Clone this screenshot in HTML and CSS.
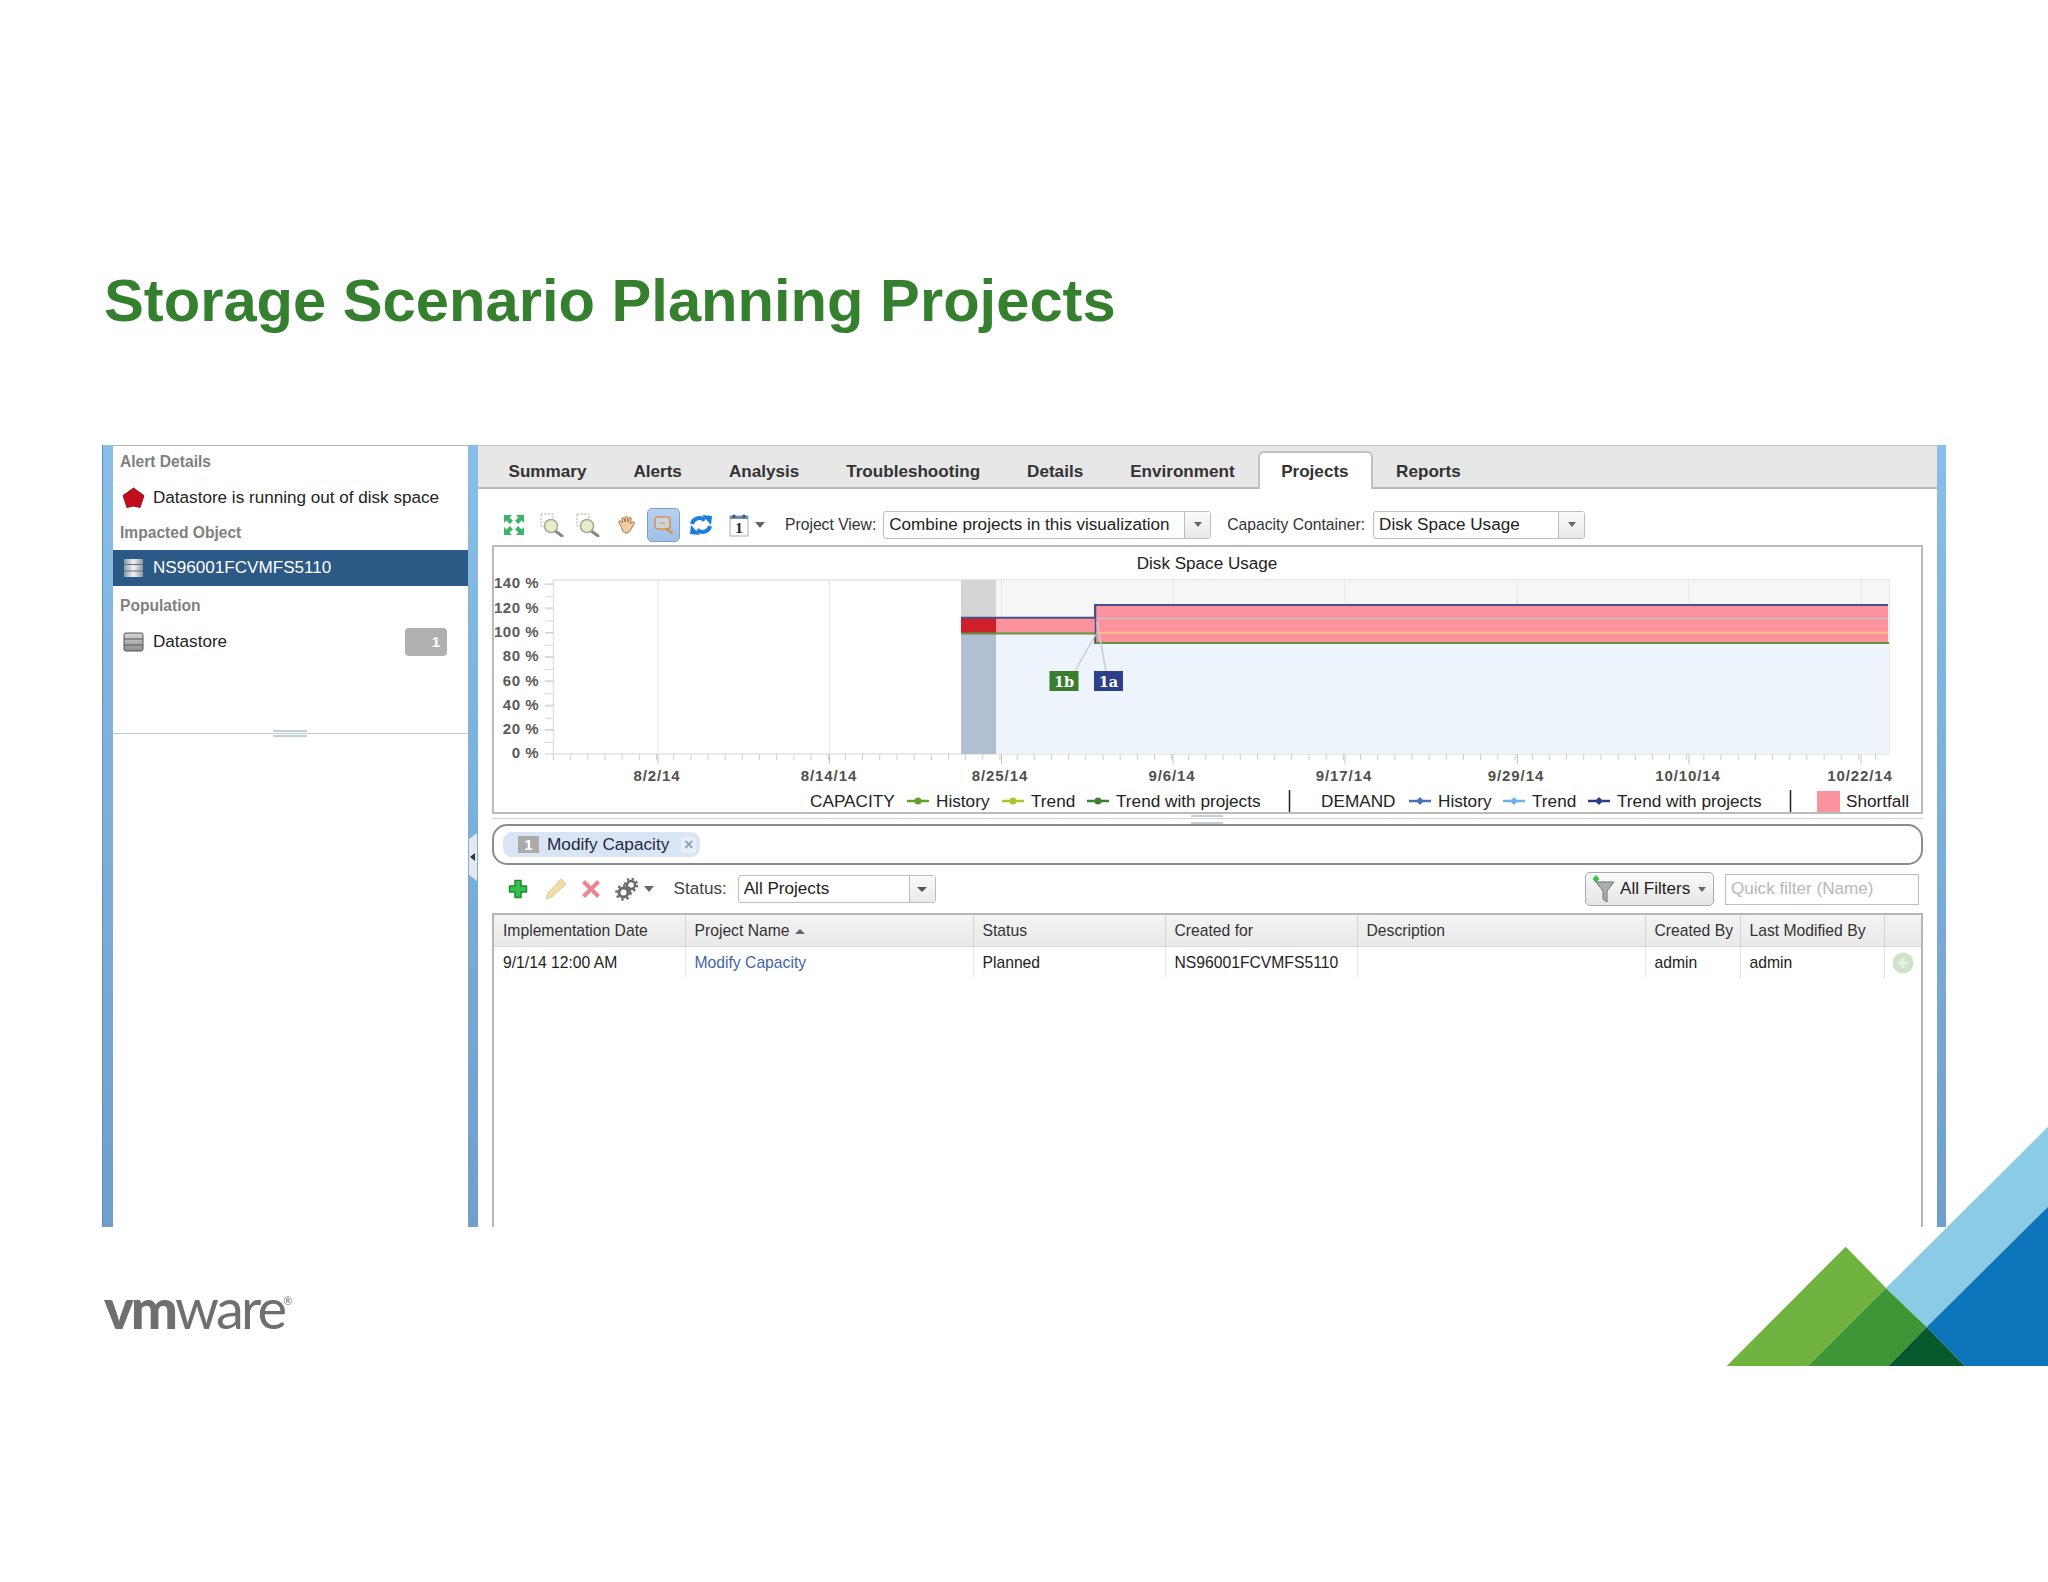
FILE: index.html
```html
<!DOCTYPE html>
<html lang="en">
<head>
  <meta charset="UTF-8">
  <title>Storage Scenario Planning Projects</title>
  <link rel="stylesheet" href="styles.css">
</head>
<body>
  <div class="slide">
    <h1 class="slide-title">Storage Scenario Planning Projects</h1>

    <div class="shot">
      <div class="rail left"></div>

      <!-- left panel -->
      <div class="side">
        <div class="side-head">Alert Details</div>
        <div class="side-row alert-row">
          <svg class="side-icon" width="23" height="22" viewBox="0 0 23 22"><path d="M11.5 1 22 8.6 18 20.5 11.5 19 5 20.5 1 8.6Z" fill="#c40d1c" stroke="#8f1b24"/></svg>
          <span>Datastore is running out of disk space</span>
        </div>
        <div class="side-head impacted">Impacted Object</div>
        <div class="side-row selected">
          <svg class="side-icon" width="21" height="20" viewBox="0 0 21 20"><rect x="1" y="1" width="19" height="18" rx="1" fill="url(#dsLight)"/><path d="M1 6.5h19M1 13h19" stroke="#5a6f85"/></svg>
          <span>NS96001FCVMFS5110</span>
        </div>
        <div class="side-head population">Population</div>
        <div class="side-row">
          <svg class="side-icon" width="21" height="20" viewBox="0 0 21 20"><rect x="1" y="1" width="19" height="18" rx="2" fill="url(#dsGrey)" stroke="#555"/><path d="M1 7h19M1 13h19" stroke="#555"/></svg>
          <span>Datastore</span>
          <span class="count">1</span>
        </div>
        <div class="side-split"><span class="grip"></span></div>
      </div>

      <div class="rail inner">
        <span class="collapse"></span>
      </div>

      <div class="main">
        <div class="tabs">
          <span class="tab">Summary</span>
          <span class="tab">Alerts</span>
          <span class="tab">Analysis</span>
          <span class="tab">Troubleshooting</span>
          <span class="tab">Details</span>
          <span class="tab">Environment</span>
          <span class="tab active">Projects</span>
          <span class="tab">Reports</span>
        </div>

        <!-- chart toolbar -->
        <div class="toolbar chart-tools">
          <svg class="tool expand" width="22" height="22" viewBox="0 0 22 22" fill="#3fb56c">
            <path d="M1 1h8L6.6 3.400 10 6.800 6.800 10 3.400 6.600 1 9ZM21 1v8l-2.400-2.400L15.200 10 12 6.800l3.400-3.400L13 1ZM1 21v-8l2.400 2.400L6.800 12 10 15.200l-3.400 3.400L9 21ZM21 21h-8l2.400-2.400L12 15.200l3.200-3.200 3.400 3.400L21 13Z"/>
          </svg>
          <svg class="tool zoom-a" width="24" height="24" viewBox="0 0 24 24">
            <rect x="1" y="1" width="12" height="12" fill="none" stroke="#9db59b" stroke-dasharray="2 1.500"/>
            <path d="M14 17l8 6" stroke="#85897f" stroke-width="3" stroke-linecap="round"/>
            <circle cx="11" cy="13" r="6.500" fill="#e8edc8" stroke="#a3aa98" stroke-width="1.500"/>
          </svg>
          <svg class="tool zoom-b" width="24" height="24" viewBox="0 0 24 24">
            <rect x="1" y="1" width="12" height="12" fill="none" stroke="#9db59b" stroke-dasharray="2 1.500"/>
            <path d="M14 17l8 6" stroke="#85897f" stroke-width="3" stroke-linecap="round"/>
            <circle cx="11" cy="13" r="6.500" fill="#e8edc8" stroke="#a3aa98" stroke-width="1.500"/>
          </svg>
          <svg class="tool hand" width="20" height="20" viewBox="0 0 20 20">
            <path d="M4 11 2 7.500c-.8-1.500 1-2.500 2-1.200L5.500 8 5 4c-.2-1.600 2-1.800 2.300-.3L8 7l.2-4.500c.1-1.500 2.300-1.500 2.400 0L11 7l1-3.800c.4-1.400 2.400-1 2.200.5L13.500 8.500 15.600 7c1.300-.8 2.400.6 1.500 1.800l-3 5c-1 2.500-2.500 4.200-5 4.200-3 0-4-3-5.100-7Z" fill="#f0cda6" stroke="#a8703f"/>
          </svg>
          <span class="tool-btn">
            <svg width="24" height="24" viewBox="0 0 24 24">
              <rect x="3" y="4" width="15" height="12" rx="3" fill="#c9d4de" stroke="#d9914e" stroke-width="1.500"/>
              <path d="M7 10h6" stroke="#d9914e"/>
              <path d="M14 16l6 4" stroke="#d9914e" stroke-width="2.500" stroke-linecap="round"/>
            </svg>
          </span>
          <svg class="tool refresh" width="24" height="24" viewBox="0 0 24 24" fill="none" stroke="#1d7fdc" stroke-width="4">
            <path d="M3 11c1-5 7-8 13-4"/>
            <path d="M21 13c-1 5-7 8-13 4"/>
            <path d="M13 2l10 1-1 9Z" fill="#1d7fdc" stroke="none"/>
            <path d="M11 22l-10-1 1-9Z" fill="#1d7fdc" stroke="none"/>
          </svg>
          <svg class="tool calendar" width="20" height="24" viewBox="0 0 20 24">
            <rect x="1" y="3" width="18" height="20" fill="#fbfbfb" stroke="#9fb2c5"/>
            <rect x="1" y="3" width="18" height="3" fill="#6f8aa5"/>
            <circle cx="5" cy="3" r="1.600" fill="#2f4d70"/>
            <circle cx="15" cy="3" r="1.600" fill="#2f4d70"/>
            <text x="10" y="20" class="cal-day" text-anchor="middle">1</text>
          </svg>
          <span class="caret cal-caret"></span>
          <label class="tool-label view-label">Project View:</label>
          <span class="combo view-combo"><span class="combo-text">Combine projects in this visualization</span><span class="combo-btn"><i class="caret small"></i></span></span>
          <label class="tool-label cap-label">Capacity Container:</label>
          <span class="combo cap-combo"><span class="combo-text">Disk Space Usage</span><span class="combo-btn"><i class="caret small"></i></span></span>
        </div>

        <!-- chart, drawn in page coordinates -->
        <div class="chart">
          <svg class="chart-svg" width="1426" height="265" viewBox="494 547 1426 265">
            <text class="chart-title" x="1207" y="569" text-anchor="middle">Disk Space Usage</text>

            <rect x="553.500" y="580" width="1335.500" height="174" fill="#fff" stroke="#e2e2e4" stroke-width="1.500"/>
            <rect x="996" y="580.500" width="893" height="173" fill="#f6f6f7"/>
            <path d="M658 580v174M829.500 580v174M1001.500 580v174M1173 580v174M1345 580v174M1517.500 580v174M1689 580v174M1861 580v174" stroke="#e6e6e9"/>

            <rect x="996" y="633" width="99" height="121" fill="#edf4fb"/>
            <rect x="1095" y="643" width="793" height="111" fill="#edf4fb"/>
            <rect x="961" y="580" width="35" height="38" fill="#d5d5d6"/>
            <rect x="961" y="633" width="35" height="121" fill="#b2bfd2"/>

            <rect x="996" y="618" width="99" height="15" fill="#fc929c"/>
            <rect x="961" y="618" width="35" height="15" fill="#cf1f2b"/>
            <rect x="1095" y="605" width="793" height="38" fill="#fc929c"/>
            <path d="M1095 618.500h793" stroke="#d9b3c1" stroke-width="2"/>
            <path d="M1095 632.700h793" stroke="#f6c08c" stroke-width="2"/>
            <path d="M961 617.800h134V605h793" fill="none" stroke="#47508f" stroke-width="2"/>
            <path d="M961 633.500h134V643h794" fill="none" stroke="#5f963f" stroke-width="2"/>
            <path d="M1095.500 605v38" stroke="#47508f" stroke-width="1.500"/>

            <path d="M1096 634 1075 671M1097 622 1106 671" stroke="#c9cdd2" stroke-width="1.500"/>
            <rect x="1049.500" y="671" width="29" height="20" fill="#3a7d2e"/>
            <text class="flag" x="1064" y="686.500" text-anchor="middle">1b</text>
            <rect x="1094" y="671" width="29" height="20" fill="#2d3f8a"/>
            <text class="flag" x="1108.500" y="686.500" text-anchor="middle">1a</text>

            <!-- axis ticks -->
            <path d="M545 608h8M545 632.500h8M545 656.800h8M545 681h8M545 705.300h8M545 729.700h8M545 754h8M545 584h8" stroke="#c9c9c9"/>
            <line x1="549" y1="584" x2="549" y2="754" stroke="#d8d8d8" stroke-width="8" stroke-dasharray="1 11.150"/>
            <line x1="553" y1="757" x2="1889" y2="757" stroke="#cfcfcf" stroke-width="6" stroke-dasharray="1 16.170"/>
            <path d="M658 754v10M829.500 754v10M1001.500 754v10M1173 754v10M1345 754v10M1517.500 754v10M1689 754v10M1861 754v10" stroke="#c4c4c4"/>

            <g class="y-labels" text-anchor="end">
              <text x="539" y="588">140 %</text>
              <text x="539" y="612.500">120 %</text>
              <text x="539" y="637">100 %</text>
              <text x="539" y="661">80 %</text>
              <text x="539" y="685.500">60 %</text>
              <text x="539" y="709.500">40 %</text>
              <text x="539" y="734">20 %</text>
              <text x="539" y="758">0 %</text>
            </g>
            <g class="x-labels" text-anchor="middle">
              <text x="657" y="780.500">8/2/14</text>
              <text x="829" y="780.500">8/14/14</text>
              <text x="1000" y="780.500">8/25/14</text>
              <text x="1172" y="780.500">9/6/14</text>
              <text x="1344" y="780.500">9/17/14</text>
              <text x="1516" y="780.500">9/29/14</text>
              <text x="1688" y="780.500">10/10/14</text>
              <text x="1860" y="780.500">10/22/14</text>
            </g>

            <!-- legend -->
            <g class="legend">
              <text x="810" y="807">CAPACITY</text>
              <path d="M907 801h22" stroke="#62a02c" stroke-width="2.500"/><circle cx="918" cy="801" r="3.500" fill="#62a02c"/>
              <text x="936" y="807">History</text>
              <path d="M1002 801h22" stroke="#a7c82c" stroke-width="2.500"/><circle cx="1013" cy="801" r="3.500" fill="#a7c82c"/>
              <text x="1031" y="807">Trend</text>
              <path d="M1087 801h22" stroke="#3f7f35" stroke-width="2.500"/><circle cx="1098" cy="801" r="3.500" fill="#3f7f35"/>
              <text x="1116" y="807">Trend with projects</text>
              <path d="M1289.500 790v22" stroke="#222" stroke-width="1.500"/>
              <text x="1321" y="807">DEMAND</text>
              <path d="M1409 801h22" stroke="#4a72bd" stroke-width="2.500"/><path d="M1420 797l4 4-4 4-4-4Z" fill="#4a72bd"/>
              <text x="1438" y="807">History</text>
              <path d="M1503 801h22" stroke="#6db0ee" stroke-width="2.500"/><path d="M1514 797l4 4-4 4-4-4Z" fill="#6db0ee"/>
              <text x="1532" y="807">Trend</text>
              <path d="M1588 801h22" stroke="#2b3f80" stroke-width="2.500"/><path d="M1599 797l4 4-4 4-4-4Z" fill="#2b3f80"/>
              <text x="1617" y="807">Trend with projects</text>
              <path d="M1790.500 790v22" stroke="#222" stroke-width="1.500"/>
              <rect x="1817" y="791" width="23" height="21" fill="#fc929c"/>
              <text x="1846" y="807">Shortfall</text>
            </g>
          </svg>
        </div>

        <div class="pane-split"><span class="grip wide"></span></div>

        <div class="pill-box">
          <span class="chip">
            <span class="chip-num">1</span>
            <span class="chip-text">Modify Capacity</span>
            <span class="chip-close">&#215;</span>
          </span>
        </div>

        <!-- project toolbar -->
        <div class="toolbar projects">
          <svg class="tool add" width="20" height="20" viewBox="0 0 20 20"><path d="M7 1.500h6v5.500h5.500v6H13v5.500H7V13H1.500V7H7Z" fill="#35c24a" stroke="#1f8a30" stroke-width="1.500" stroke-linejoin="round"/></svg>
          <svg class="tool pencil" width="24" height="24" viewBox="0 0 24 24"><path d="M2 22l2-6L17 2l5 5L8 20Z" fill="#f1dda8" stroke="#d9c99f"/></svg>
          <svg class="tool remove" width="20" height="20" viewBox="0 0 20 20"><path d="M4 1l6 6 6-6 3 3-6 6 6 6-3 3-6-6-6 6-3-3 6-6-6-6Z" fill="#e88891"/></svg>
          <svg class="tool gears" width="24" height="24" viewBox="0 0 24 24" fill="none" stroke="#6b6b6b">
            <circle cx="16" cy="8" r="4" stroke-width="2.500"/>
            <circle cx="16" cy="8" r="6" stroke-width="2.500" stroke-dasharray="2.200 2.500"/>
            <circle cx="8.500" cy="15.500" r="4.500" stroke-width="3" fill="#fff"/>
            <circle cx="8.500" cy="15.500" r="7" stroke-width="2.500" stroke-dasharray="2.500 2.900"/>
          </svg>
          <span class="caret gear-caret"></span>
          <label class="status-label">Status:</label>
          <span class="combo status-combo"><span class="combo-text">All Projects</span><span class="combo-btn"><i class="caret small dark"></i></span></span>
          <span class="filter-btn">
            <svg width="24" height="28" viewBox="0 0 24 28">
              <path d="M5 7h18l-7 9v11l-4-3v-8Z" fill="#a9adad" stroke="#6f7474"/>
              <path d="M5 0l3.500 4L5 8 1.500 4Z" fill="#35c24a"/>
            </svg>
            <span>All Filters</span>
            <i class="caret small"></i>
          </span>
          <span class="quick-filter">Quick filter (Name)</span>
        </div>

        <div class="grid-wrap">
          <table class="grid">
            <colgroup>
              <col class="c-date"><col class="c-name"><col class="c-status"><col class="c-for"><col class="c-desc"><col class="c-by"><col class="c-mod"><col class="c-act">
            </colgroup>
            <thead>
              <tr>
                <th>Implementation Date</th>
                <th>Project Name <i class="sort-up"></i></th>
                <th>Status</th>
                <th>Created for</th>
                <th>Description</th>
                <th>Created By</th>
                <th>Last Modified By</th>
                <th></th>
              </tr>
            </thead>
            <tbody>
              <tr>
                <td>9/1/14 12:00 AM</td>
                <td class="link">Modify Capacity</td>
                <td>Planned</td>
                <td>NS96001FCVMFS5110</td>
                <td></td>
                <td>admin</td>
                <td>admin</td>
                <td class="act"><svg width="22" height="22" viewBox="0 0 22 22"><circle cx="11" cy="11" r="10.500" fill="#cfe3c9"/><path d="M11 6v10M6 11h10" stroke="#e6f1e2" stroke-width="3"/></svg></td>
              </tr>
            </tbody>
          </table>
        </div>
      </div>

      <div class="rail right"></div>
    </div>

    <div class="logo"><span class="vm">vm</span><span class="ware">ware</span><span class="reg">&#174;</span></div>

    <!-- corner graphic -->
    <svg class="corner" width="322" height="240" viewBox="1726 1126 322 240">
      <polygon points="1726.700,1366 1845.700,1246.700 1886,1288 1807.700,1366" fill="#70b43f"/>
      <polygon points="1807.700,1366 1886,1288 1926.700,1327 1888.300,1366" fill="#3f9637"/>
      <polygon points="1888.300,1366 1926.700,1327 1965,1366" fill="#05592c"/>
      <polygon points="1886,1288 2048,1126.700 2048,1206.700 1926.700,1327" fill="#8ccbe5"/>
      <polygon points="1926.700,1327 2048,1206.700 2048,1366 1965,1366" fill="#0c75b9"/>
    </svg>
  </div>

  <svg width="0" height="0" class="defs">
    <defs>
      <linearGradient id="dsGrey" x1="0" y1="0" x2="0" y2="1"><stop offset="0" stop-color="#d5d5d5"/><stop offset="1" stop-color="#8d8d8d"/></linearGradient>
      <linearGradient id="dsLight" x1="0" y1="0" x2="1" y2="0"><stop offset="0" stop-color="#8f99a3"/><stop offset=".5" stop-color="#f2f2f2"/><stop offset="1" stop-color="#8f99a3"/></linearGradient>
    </defs>
  </svg>
</body>
</html>
```

FILE: styles.css
```css
/* slide frame */
body {
  margin: 0;
  background: #fff;
  font-family: "Liberation Sans", Arial, sans-serif;
}
.slide {
  position: relative;
  width: 2048px;
  height: 1582px;
  overflow: hidden;
  background: #fff;
}
.slide-title {
  margin: 0;
  padding: 263px 0 0 104px;
  height: 445px;
  box-sizing: border-box;
  font-size: 59.700px;
  line-height: 76px;
  font-weight: bold;
  color: #35802f;
}
.defs {
  position: absolute;
}

/* embedded screenshot */
.shot {
  display: flex;
  width: 1844px;
  height: 782px;
  margin-left: 102px;
  color: #222;
  overflow: hidden;
}
.rail {
  flex: none;
  width: 10px;
  background: linear-gradient(#88bee7, #6f9fca);
}
.rail.left {
  width: 11px;
  box-shadow: inset 1px 0 0 #5f8db5;
}
.rail.right {
  width: 9px;
}
.rail.inner {
  position: relative;
}
.collapse {
  position: absolute;
  left: 1px;
  top: 388px;
  width: 8px;
  height: 48px;
  background: #e4e8ec;
  clip-path: polygon(0 6px, 100% 0, 100% 100%, 0 calc(100% - 6px));
}
.collapse::after {
  content: "";
  position: absolute;
  left: 1px;
  top: 20px;
  border: 4px solid transparent;
  border-left: 0;
  border-right: 5px solid #333;
}

/* left panel */
.side {
  flex: none;
  width: 355px;
  border-top: 1px solid #b5b5b5;
  box-sizing: border-box;
}
.side-head {
  height: 32px;
  padding-left: 7px;
  font-size: 15.600px;
  font-weight: bold;
  line-height: 32px;
  color: #808080;
}
.side-head.impacted {
  height: 34px;
  line-height: 34px;
}
.side-head.population {
  height: 39px;
  line-height: 40px;
}
.side-row {
  display: flex;
  align-items: center;
  height: 34px;
  padding-left: 9px;
  font-size: 17.100px;
}
.alert-row {
  height: 38px;
  padding-top: 1px;
  box-sizing: border-box;
}
.side-icon {
  flex: none;
  margin-right: 8px;
  width: 23px;
}
.side-row.selected {
  height: 36px;
  color: #fff;
  background: #2c5985;
}
.count {
  width: 42px;
  height: 28px;
  margin-left: auto;
  margin-right: 21px;
  padding-right: 7px;
  box-sizing: border-box;
  border-radius: 4px;
  background: #b0b0b0;
  color: #fff;
  font-size: 15px;
  font-weight: bold;
  line-height: 28px;
  text-align: right;
}
.side-split {
  position: relative;
  margin-top: 74px;
  border-top: 1.500px solid #bccbdc;
}
.grip {
  position: absolute;
  left: 160px;
  top: -4px;
  width: 34px;
  height: 3px;
  border-top: 2px solid #c3cfdd;
  border-bottom: 2px solid #c3cfdd;
}

/* tabs */
.main {
  flex: 1;
  display: flex;
  flex-direction: column;
  min-width: 0;
}
.tabs {
  flex: none;
  display: flex;
  align-items: flex-end;
  height: 44px;
  padding-left: 7px;
  box-sizing: border-box;
  background: #e7e7e7;
  border-top: 1px solid #c8c8c8;
  border-bottom: 2px solid #b9b9b9;
}
.tab {
  height: 36px;
  padding: 0 23.500px;
  font-size: 17.100px;
  font-weight: bold;
  line-height: 42px;
  color: #333;
}
.tab.active {
  height: 38px;
  margin-bottom: -2px;
  padding: 0 22px 0 21px;
  background: #fff;
  border: 2px solid #c2c2c2;
  border-bottom: 0;
  border-radius: 6px 6px 0 0;
  box-sizing: border-box;
  line-height: 38px;
}

/* toolbars */
.toolbar {
  flex: none;
  display: flex;
  align-items: center;
  box-sizing: border-box;
  height: 58px;
  padding-left: 25px;
  position: relative;
}
.chart-tools {
  height: 56px;
  padding-top: 15px;
}
.tool {
  flex: none;
}
.zoom-a {
  margin-left: 15px;
}
.zoom-b {
  margin-left: 12px;
}
.hand {
  margin-left: 17px;
}
.tool-btn {
  display: flex;
  align-items: center;
  justify-content: center;
  width: 33px;
  height: 34px;
  margin-left: 10px;
  box-sizing: border-box;
  border: 1px solid #7f9fc6;
  border-radius: 5px;
  background: linear-gradient(#b6d2f1, #9fc0e6);
}
.refresh {
  margin-left: 9px;
}
.calendar {
  margin-left: 16px;
}
.caret {
  display: inline-block;
  width: 0;
  height: 0;
  border: 5px solid transparent;
  border-top: 6px solid #666;
  border-bottom: 0;
}
.caret.small {
  border-width: 5px 4px 0;
  border-top-color: #666;
}
.caret.dark {
  border-width: 5px 5px 0;
  border-top-color: #555;
}
.cal-caret {
  margin-left: 6px;
}
.cal-day {
  font: bold 15px "Liberation Serif", serif;
  fill: #222;
}
.tool-label {
  font-size: 15.700px;
  color: #333;
}
.view-label {
  margin-left: 20px;
}
.cap-label {
  margin-left: 16px;
}
.combo {
  flex: none;
  display: flex;
  align-items: stretch;
  box-sizing: border-box;
  height: 28px;
  border: 1.500px solid #bdbdbd;
  border-radius: 3px;
  background: #fff;
  font-size: 17.100px;
  line-height: 25px;
  color: #222;
}
.combo-text {
  flex: 1;
  padding-left: 5px;
  white-space: nowrap;
}
.combo-btn {
  display: flex;
  align-items: center;
  justify-content: center;
  flex: none;
  width: 25px;
  border-left: 1.500px solid #bdbdbd;
  background: linear-gradient(#fafafa, #e9e9e9);
}
.view-combo {
  width: 328px;
  margin-left: 7px;
}
.cap-combo {
  width: 212px;
  margin-left: 8px;
}
.status-combo {
  width: 198px;
  margin-left: 11px;
}

/* chart */
.chart {
  flex: none;
  width: 1431px;
  height: 269px;
  margin-left: 14px;
  box-sizing: border-box;
  border: 2px solid #bababa;
  background: #fff;
}
.chart-svg {
  display: block;
  font-family: "Liberation Sans", Arial, sans-serif;
}
.chart-title {
  font-size: 17.100px;
  fill: #222;
}
.flag {
  font: bold 14.500px "DejaVu Serif", serif;
  fill: #fff;
}
.y-labels text,
.x-labels text {
  font-size: 15px;
  fill: #505050;
  font-weight: bold;
}
.x-labels text {
  letter-spacing: .9px;
}
.y-labels text {
  fill: #5a5a5a;
  letter-spacing: .5px;
}
.legend text {
  font-size: 17.200px;
  fill: #222;
}
.pane-split {
  position: relative;
  flex: none;
  height: 10px;
}
.pane-split::before {
  content: "";
  position: absolute;
  left: 14px;
  width: 1431px;
  top: 4px;
  border-top: 1px solid #cfd3d8;
}
.grip.wide {
  left: 713px;
  top: 1px;
  width: 32px;
  height: 5px;
}

/* selected project strip */
.pill-box {
  flex: none;
  display: flex;
  align-items: center;
  width: 1431px;
  height: 41px;
  margin-left: 14px;
  padding-left: 9px;
  box-sizing: border-box;
  border: 2.500px solid #8c8c8c;
  border-radius: 15px;
}
.chip {
  display: flex;
  align-items: center;
  width: 197px;
  height: 25px;
  border-radius: 9px;
  background: #d9e4f5;
  padding-left: 15px;
  box-sizing: border-box;
}
.chip-num {
  flex: none;
  width: 21px;
  height: 17px;
  background: #ababab;
  color: #fff;
  font-size: 15px;
  font-weight: bold;
  line-height: 17px;
  text-align: center;
}
.chip-text {
  margin-left: 8px;
  font-size: 17.200px;
  white-space: nowrap;
  color: #1f2a44;
}
.chip-close {
  flex: none;
  width: 15px;
  height: 16px;
  margin-left: 12px;
  border-radius: 3px;
  background: #e9eff8;
  color: #8ea3bd;
  font-size: 16px;
  font-weight: bold;
  line-height: 15px;
  text-align: center;
}

/* project toolbar */
.toolbar.projects {
  height: 48px;
  padding-left: 30px;
  padding-right: 18px;
}
.pencil {
  margin-left: 16px;
}
.remove {
  margin-left: 13px;
}
.gears {
  margin-left: 13.500px;
}
.gear-caret {
  margin-left: 5.500px;
}
.status-label {
  margin-left: 19.500px;
  font-size: 17.100px;
  color: #444;
}
.filter-btn {
  display: flex;
  align-items: center;
  flex: none;
  gap: 5px;
  width: 129px;
  height: 34px;
  margin-left: auto;
  padding-left: 5px;
  box-sizing: border-box;
  border: 1.500px solid #a9a9a9;
  border-radius: 5px;
  background: linear-gradient(#fbfbfb, #e4e4e4);
  font-size: 17.100px;
  white-space: nowrap;
  color: #222;
}
.filter-btn .caret {
  margin-left: 3px;
}
.quick-filter {
  flex: none;
  width: 194px;
  height: 31px;
  margin-left: 11px;
  padding-left: 5px;
  box-sizing: border-box;
  border: 1.500px solid #bdbdbd;
  font-size: 17.100px;
  line-height: 28px;
  white-space: nowrap;
  color: #b8b8b8;
}

/* projects table */
.grid-wrap {
  flex: 1;
  width: 1431px;
  margin-left: 14px;
  box-sizing: border-box;
  border: 2px solid #b6b6b6;
  border-bottom: 0;
}
.grid {
  width: 100%;
  table-layout: fixed;
  border-collapse: collapse;
  font-size: 15.700px;
}
.c-date { width: 191px; }
.c-name { width: 288px; }
.c-status { width: 192px; }
.c-for { width: 192px; }
.c-desc { width: 288px; }
.c-by { width: 95px; }
.c-mod { width: 144px; }
.grid th {
  height: 31px;
  padding: 0 0 0 9px;
  border-bottom: 1px solid #d9d9d9;
  border-right: 1px solid #d4d4d4;
  background: linear-gradient(#f3f3f3, #e9e9e9);
  font-weight: normal;
  text-align: left;
  white-space: nowrap;
  color: #333;
}
.grid td {
  height: 31px;
  padding: 0 0 0 9px;
  border-right: 1px solid #e3e3e3;
  white-space: nowrap;
  color: #222;
}
.grid td.link {
  color: #3f66a8;
}
.grid th:last-child,
.grid td:last-child {
  border-right: 0;
}
.grid td.act {
  padding-left: 7px;
}
.act svg {
  display: block;
}
.sort-up {
  display: inline-block;
  margin: 0 0 2px 1px;
  border: 5px solid transparent;
  border-top: 0;
  border-bottom: 5px solid #666;
}

/* logo and corner art */
.logo {
  margin: 46px 0 0 104px;
  height: 70px;
  line-height: 70px;
  color: #6f6f72;
  font-family: Lato, sans-serif;
  font-size: 56px;
  white-space: nowrap;
}
.vm {
  font-weight: 900;
  letter-spacing: -3px;
}
.ware {
  font-weight: 400;
  letter-spacing: -2.800px;
}
.reg {
  position: relative;
  top: -24px;
  margin-left: -1px;
  font-size: 11px;
}
.corner {
  position: absolute;
  left: 1726px;
  top: 1126px;
}
```
